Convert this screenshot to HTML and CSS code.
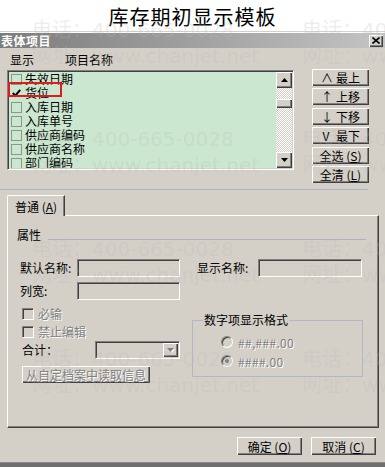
FILE: index.html
```html
<!DOCTYPE html>
<html lang="zh-CN">
<head>
<meta charset="utf-8">
<title>库存期初显示模板</title>
<link rel="stylesheet" href="styles.css">
</head>
<body>
<div class="screen">
  <h1 class="page-title">库存期初显示模板</h1>
  <div class="dialog">
    <div class="titlebar">
      <span class="titlebar-text">表体项目</span>
      <span class="close-btn"><svg width="8" height="7" viewBox="0 0 8 7"><path d="M0.5 0.5 L7.5 6.5 M7.5 0.5 L0.5 6.5" stroke="#000" stroke-width="1.6" fill="none"/></svg></span>
    </div>
    <div class="list-head"><span class="col-show">显示</span><span class="col-name">项目名称</span></div>
    <div class="list-row">
      <div class="listbox">
        <ul class="items">
          <li class="item"><span class="cb"></span>失效日期</li>
          <li class="item"><span class="cb cb-checked"><svg width="11" height="10" viewBox="0 0 11 10"><path d="M1 5 L4 8.3 L10 1.2" stroke="#000" stroke-width="2.4" fill="none"/></svg></span>货位</li>
          <li class="item"><span class="cb"></span>入库日期</li>
          <li class="item"><span class="cb"></span>入库单号</li>
          <li class="item"><span class="cb"></span>供应商编码</li>
          <li class="item"><span class="cb"></span>供应商名称</li>
          <li class="item"><span class="cb"></span>部门编码</li>
        </ul>
        <div class="scrollbar">
          <span class="sb-btn"><svg width="7" height="4" viewBox="0 0 7 4"><path d="M0 4 L3.5 0 L7 4 Z" fill="#000"/></svg></span>
          <span class="sb-track"><span class="sb-thumb"></span></span>
          <span class="sb-btn"><svg width="7" height="4" viewBox="0 0 7 4"><path d="M0 0 L7 0 L3.5 4 Z" fill="#000"/></svg></span>
        </div>
        <span class="highlight"></span>
      </div>
      <div class="move-buttons">
        <button class="btn btn-move"><span class="arrow">∧</span>最上</button>
        <button class="btn btn-move"><span class="arrow">↑</span>上移</button>
        <button class="btn btn-move"><span class="arrow">↓</span>下移</button>
        <button class="btn btn-move"><span class="arrow">V</span>最下</button>
        <button class="btn btn-move">全选 (<u>S</u>)</button>
        <button class="btn btn-move">全清 (<u>L</u>)</button>
      </div>
    </div>
    <div class="separator"></div>
    <div class="tabs"><div class="tab">普通 (<u>A</u>)</div></div>
    <div class="panel">
      <div class="prop-head"><span>属性</span><span class="prop-line"></span></div>
      <div class="form-row">
        <span class="label label-name">默认名称:</span><span class="field field-a"></span>
        <span class="label label-show">显示名称:</span><span class="field field-b"></span>
      </div>
      <div class="lower">
        <div class="lower-left">
          <div class="form-row form-row-tight">
            <span class="label label-name">列宽:</span><span class="field field-a"></span>
          </div>
          <div class="check-row check-first"><span class="chk"></span><span class="disabled">必输</span></div>
          <div class="check-row"><span class="chk"></span><span class="disabled">禁止编辑</span></div>
          <div class="combo-row">
            <span class="label label-sum">合计：</span>
            <span class="combo"><span class="combo-btn"><svg width="8" height="5" viewBox="0 0 8 5"><path d="M1 1 L8 1 L4.5 5 Z" fill="#fff"/><path d="M0 0 L7 0 L3.5 4 Z" fill="#808080"/></svg></span></span>
          </div>
          <button class="btn btn-read"><span class="disabled">从自定档案中读取信息</span></button>
        </div>
        <fieldset class="numfmt">
          <legend>数字项显示格式</legend>
          <div class="radio-row"><span class="radio"></span><span class="disabled">##,###.00</span></div>
          <div class="radio-row"><span class="radio radio-on"></span><span class="disabled">####.00</span></div>
        </fieldset>
      </div>
    </div>
    <div class="footer">
      <button class="btn btn-foot">确定 (<u>O</u>)</button>
      <button class="btn btn-foot">取消 (<u>C</u>)</button>
    </div>
    <div class="bottom-strip"></div>
  </div>
  <div class="watermarks">
    <span class="wm wm-a1">电话：400-665-0028</span>
    <span class="wm wm-a1 wm-right">电话：400-665-0028</span>
    <span class="wm wm-b1">网址：www.chanjet.net</span>
    <span class="wm wm-b1 wm-right">网址：www.chanjet.net</span>
    <span class="wm wm-a2">电话：400-665-0028</span>
    <span class="wm wm-a2 wm-right">电话：400-665-0028</span>
    <span class="wm wm-b2">网址：www.chanjet.net</span>
    <span class="wm wm-b2 wm-right">网址：www.chanjet.net</span>
    <span class="wm wm-a3">电话：400-665-0028</span>
    <span class="wm wm-a3 wm-right">电话：400-665-0028</span>
    <span class="wm wm-b3">网址：www.chanjet.net</span>
    <span class="wm wm-b3 wm-right">网址：www.chanjet.net</span>
    <span class="wm wm-a4">电话：400-665-0028</span>
    <span class="wm wm-a4 wm-right">电话：400-665-0028</span>
    <span class="wm wm-b4">网址：www.chanjet.net</span>
    <span class="wm wm-b4 wm-right">网址：www.chanjet.net</span>
  </div>
</div>
</body>
</html>
```

FILE: styles.css
```css
* { box-sizing: border-box; }

body {
  margin: 0;
  font-family: "Noto Sans CJK SC", "Liberation Sans", sans-serif;
  font-size: 12px;
  color: #000;
}

.screen {
  position: relative;
  width: 385px;
  height: 467px;
  overflow: hidden;
  background: #fff;
}

.page-title {
  margin: 0;
  height: 31px;
  padding-top: 2px;
  line-height: 29px;
  text-align: center;
  font-size: 20px;
  font-weight: 400;
  letter-spacing: 1px;
}

.dialog {
  background: #d4d0c8;
  border-top: 1px solid #d4d0c8;
  padding-top: 1px;
  box-shadow: inset 0 1px #fff;
  height: 436px;
}

.titlebar {
  height: 15px;
  display: flex;
  align-items: center;
  justify-content: space-between;
  background: linear-gradient(to right, #7c7c7c, #c4c4c4);
  padding: 0 2px 0 1px;
}

.titlebar-text {
  color: #fff;
  font-weight: 700;
  font-size: 12px;
  letter-spacing: 0.5px;
  line-height: 15px;
}

.close-btn {
  width: 14px;
  height: 12px;
  display: flex;
  align-items: center;
  justify-content: center;
  background: #d4d0c8;
  box-shadow: inset 1px 1px #fff, inset -1px -1px #404040, inset -2px -2px #808080;
}

.list-head {
  height: 22px;
  padding: 2px 0 0 10px;
  line-height: 20px;
  display: flex;
}

.col-show { width: 55px; }

.list-row {
  display: flex;
  align-items: flex-start;
  padding-left: 7px;
  height: 113px;
}

.listbox {
  position: relative;
  width: 287px;
  height: 100px;
  display: flex;
  background: #cbe7cf;
  border: 1px solid;
  border-color: #808080 #fff #fff #808080;
  box-shadow: inset 1px 1px #404040, inset -1px -1px #d4d0c8;
  padding: 1px;
}

.items {
  list-style: none;
  margin: 0;
  padding: 0;
  flex: 1;
  overflow: hidden;
}

.item {
  height: 14px;
  line-height: 14px;
  display: flex;
  align-items: center;
  padding-left: 2px;
}

.cb {
  width: 11px;
  height: 11px;
  margin-right: 3px;
  border: 1px solid #8a978c;
  display: flex;
  align-items: center;
  justify-content: center;
}

.cb-checked { border-color: transparent; }

.scrollbar {
  width: 16px;
  display: flex;
  flex-direction: column;
}

.sb-btn {
  width: 16px;
  height: 16px;
  display: flex;
  align-items: center;
  justify-content: center;
  background: #d4d0c8;
  box-shadow: inset 1px 1px #fff, inset -1px -1px #404040, inset -2px -2px #808080;
}

.sb-track {
  flex: 1;
  background: repeating-conic-gradient(#d4d0c8 0 25%, #fff 0 50%) 0 0 / 2px 2px;
}

.sb-thumb {
  display: block;
  margin-top: 11px;
  width: 16px;
  height: 9px;
  background: #d4d0c8;
  box-shadow: inset 1px 1px #fff, inset -1px -1px #404040, inset -2px -2px #808080;
}

.highlight {
  position: absolute;
  left: 0;
  top: 11px;
  width: 54px;
  height: 15px;
  border: 2px solid #e01b1b;
}

.move-buttons {
  margin: -1px 0 0 18px;
  width: 57px;
  display: flex;
  flex-direction: column;
  gap: 2.4px;
}

.btn {
  font-family: inherit;
  font-size: 12px;
  color: #000;
  background: #d4d0c8;
  border: none;
  padding: 0;
  box-shadow: inset 1px 1px #fff, inset -1px -1px #404040, inset -2px -2px #808080;
  display: flex;
  align-items: center;
  justify-content: center;
}

.btn u { text-underline-offset: 1px; }

.btn-move {
  width: 57px;
  height: 17px;
  line-height: 17px;
}

.arrow {
  width: 10px;
  margin-right: 5px;
  text-align: center;
}

.separator {
  height: 1px;
  margin: 6px 17px 0 0;
  background: #aab2c6;
}

.tabs {
  margin-top: 5px;
  height: 20px;
  padding-left: 7px;
  display: flex;
}

.tab {
  position: relative;
  z-index: 1;
  width: 58px;
  height: 21px;
  padding: 2px 0 0 7px;
  line-height: 18px;
  background: #d4d0c8;
  border-left: 1px solid #fff;
  border-top: 1px solid #fff;
  border-right: 1px solid #404040;
  border-top-left-radius: 2px;
  box-shadow: inset -1px 0 #808080;
}

.panel {
  margin: 0 6px 0 7px;
  height: 213px;
  border: 1px solid;
  border-color: #fff #404040 #404040 #fff;
  box-shadow: inset -1px -1px #808080;
}

.prop-head {
  margin: 12px 0 0 9px;
  height: 14px;
  line-height: 14px;
  display: flex;
}

.prop-line {
  flex: 1;
  height: 1px;
  margin: 11px 12px 0 7px;
  background: #aab2c6;
}

.form-row {
  margin-top: 17px;
  height: 18px;
  display: flex;
  align-items: center;
}

.form-row-tight { margin-top: 0; }

.label { line-height: 14px; }

.label-name { width: 69px; padding-left: 12px; }
.label-show { width: 78px; padding-left: 17px; }
.label-sum { width: 73px; padding-left: 0; }

.field {
  height: 18px;
  border: 1px solid;
  border-color: #808080 #fff #fff #808080;
  box-shadow: inset 1px 1px #404040;
  background: #d4d0c8;
}

.field-a { width: 103px; }
.field-b { width: 104px; }

.lower {
  margin-top: 5px;
  display: flex;
  align-items: flex-start;
}

.lower-left {
  width: 184px;
  display: flex;
  flex-direction: column;
}

.disabled {
  color: #808080;
  text-shadow: 1px 1px 0 #fff;
}

.check-row {
  margin: 4px 0 0 14px;
  height: 14px;
  line-height: 14px;
  display: flex;
  align-items: center;
}

.check-first { margin-top: 7px; }

.chk {
  width: 12px;
  height: 12px;
  margin-right: 4px;
  border: 1px solid;
  border-color: #808080 #fff #fff #808080;
  box-shadow: inset 1px 1px #404040;
  background: #d4d0c8;
}

.combo-row {
  margin: 2px 0 0 14px;
  height: 18px;
  display: flex;
  align-items: center;
}

.combo {
  width: 85px;
  height: 18px;
  display: flex;
  justify-content: flex-end;
  padding: 1px;
  border: 1px solid;
  border-color: #808080 #fff #fff #808080;
  box-shadow: inset 1px 1px #404040;
  background: #d4d0c8;
}

.combo-btn {
  width: 15px;
  height: 14px;
  display: flex;
  align-items: center;
  justify-content: center;
  background: #d4d0c8;
  box-shadow: inset 1px 1px #fff, inset -1px -1px #404040, inset -2px -2px #808080;
}

.btn-read {
  margin: 7px 0 0 14px;
  width: 128px;
  height: 17px;
}

.numfmt {
  margin: 31px 0 0 0;
  width: 171px;
  height: 64px;
  padding: 0 0 0 28px;
  border: 1px solid #aeb8cc;
}

.numfmt legend {
  margin-left: -18px;
  padding: 0 1px;
  line-height: 14px;
  font-size: 12px;
}

.radio-row {
  height: 14px;
  display: flex;
  align-items: center;
  margin-top: 5px;
  font-size: 12px;
  letter-spacing: 0.3px;
}

.radio-row:first-of-type { margin-top: 8px; }

.radio {
  position: relative;
  width: 12px;
  height: 12px;
  margin-right: 5px;
  border-radius: 50%;
  border: 1px solid;
  border-color: #808080 #fff #fff #808080;
  box-shadow: inset 1px 1px #404040;
  background: #d4d0c8;
}

.radio-on::after {
  content: "";
  position: absolute;
  left: 3px;
  top: 3px;
  width: 4px;
  height: 4px;
  border-radius: 50%;
  background: #808080;
}

.footer {
  margin-top: 9px;
  padding-right: 9px;
  display: flex;
  justify-content: flex-end;
  gap: 9px;
}

.btn-foot {
  width: 65px;
  height: 18px;
}

.bottom-strip {
  margin-top: 7px;
  height: 5px;
  background: #6f6f6f;
  border-top: 1px solid #8a8a8a;
}

.watermarks {
  position: absolute;
  inset: 0;
  pointer-events: none;
}

.wm {
  position: absolute;
  left: 32px;
  white-space: nowrap;
  font-family: "DejaVu Sans", "Noto Sans CJK SC", sans-serif;
  font-size: 20px;
  line-height: 20px;
  color: rgba(185, 185, 185, 0.26);
}

.wm-right { left: 302px; }

.wm-a1 { top: 20px; }
.wm-b1 { top: 46px; }
.wm-a2 { top: 129px; }
.wm-b2 { top: 155px; }
.wm-a3 { top: 239px; }
.wm-b3 { top: 265px; }
.wm-a4 { top: 349px; }
.wm-b4 { top: 375px; }
```
